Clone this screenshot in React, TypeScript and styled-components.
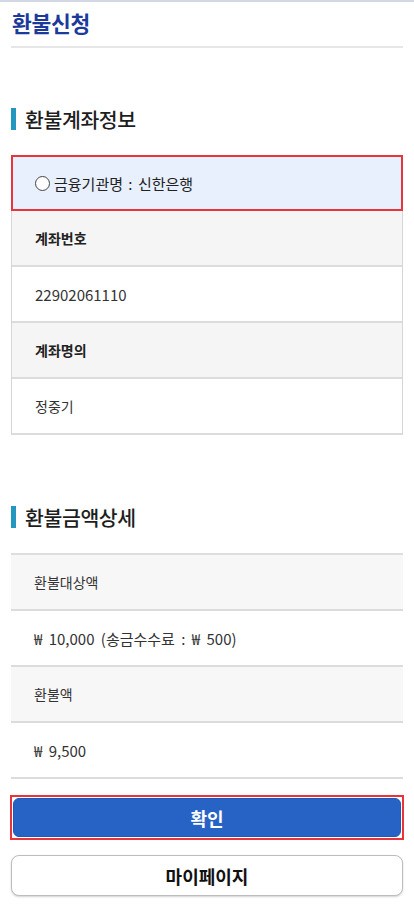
import React from 'react'
import styled, { createGlobalStyle } from 'styled-components'

const GlobalStyle = createGlobalStyle`
  html, body {
    margin: 0;
    padding: 0;
    background: #fff;
  }
  body {
    font-family: "Noto Sans CJK KR", "Noto Sans", sans-serif;
    color: #222;
  }
`

const Page = styled.div`
  border-top: 2px solid #d3d8e6;
  padding: 0 11px 20px;
`

const PageTitle = styled.h1`
  margin: 0;
  padding: 0 0 3px 1px;
  line-height: 41px;
  font-size: 21.5px;
  font-weight: 700;
  color: #1c3a9c;
  border-bottom: 2px solid #e6e6e6;
  letter-spacing: -0.3px;
`

const Section = styled.section<{ $top: number }>`
  margin-top: ${({ $top }) => $top}px;
`

const SectionTitle = styled.h2`
  display: flex;
  align-items: center;
  gap: 9px;
  margin: 0 0 25px;
  height: 22px;
  font-size: 20.5px;
  font-weight: 500;
  color: #1e1e1e;
  letter-spacing: -0.4px;
  &::before {
    content: '';
    width: 5px;
    height: 22px;
    background: #2397bf;
  }
`

const BoxTable = styled.div`
  border-left: 1px solid #d6d6d6;
  border-right: 1px solid #d6d6d6;
`

const LineTable = styled.div`
  border-top: 2px solid #dedede;
`

const Row = styled.div<{ $shade?: string }>`
  box-sizing: border-box;
  display: flex;
  align-items: center;
  height: 56px;
  padding-left: 23px;
  background: ${({ $shade }) => $shade || '#fff'};
  border-bottom: 2px solid #dcdcdc;
  font-size: 15px;
  color: #333;
  word-spacing: 3px;
  white-space: pre;
`

const Label = styled.span<{ $bold?: boolean }>`
  font-size: 14px;
  font-weight: ${({ $bold }) => ($bold ? 700 : 400)};
  color: ${({ $bold }) => ($bold ? '#222' : '#333')};
  word-spacing: 0;
`

const HighlightRow = styled.div`
  box-sizing: border-box;
  display: flex;
  align-items: center;
  gap: 2px;
  height: 56px;
  margin: 0 -1px;
  padding-left: 22px;
  background: #e8effd;
  border: 2px solid #e8343a;
  font-size: 15px;
  color: #222;
  word-spacing: 2px;
  white-space: pre;
`

const Radio = styled.span`
  display: inline-block;
  box-sizing: border-box;
  width: 15px;
  height: 15px;
  border: 1.5px solid #444;
  border-radius: 50%;
  background: #fff;
  margin-right: 2px;
`

const Buttons = styled.div`
  display: flex;
  flex-direction: column;
  gap: 15px;
  margin-top: 16px;
`

const Focus = styled.div`
  margin: 0 -1px;
  padding: 1px;
  border: 2px solid #e8343a;
`

const Button = styled.button<{ $primary?: boolean }>`
  display: block;
  width: 100%;
  box-sizing: border-box;
  height: ${({ $primary }) => ($primary ? 39 : 41)}px;
  border: ${({ $primary }) => ($primary ? '1px solid #2159b8' : '1px solid #bdbdbd')};
  border-radius: ${({ $primary }) => ($primary ? 6 : 8)}px;
  background: ${({ $primary }) => ($primary ? '#2763c5' : '#fff')};
  color: ${({ $primary }) => ($primary ? '#fff' : '#111')};
  box-shadow: ${({ $primary }) => ($primary ? 'none' : '0 1px 2px rgba(0,0,0,0.18)')};
  font-family: "Noto Sans CJK KR", "Noto Sans", sans-serif;
  font-size: 18px;
  font-weight: 700;
  padding: 0;
  cursor: pointer;
`

const App: React.FC = () => {
  return (
    <>
      <GlobalStyle />
      <Page>
        <PageTitle>환불신청</PageTitle>

        <Section $top={60}>
          <SectionTitle>환불계좌정보</SectionTitle>
          <BoxTable>
            <HighlightRow>
              <Radio />
              금융기관명 : 신한은행
            </HighlightRow>
            <Row $shade="#f5f5f5">
              <Label $bold>계좌번호</Label>
            </Row>
            <Row>22902061110</Row>
            <Row $shade="#f5f5f5">
              <Label $bold>계좌명의</Label>
            </Row>
            <Row>
              <Label>정중기</Label>
            </Row>
          </BoxTable>
        </Section>

        <Section $top={71}>
          <SectionTitle>환불금액상세</SectionTitle>
          <LineTable>
            <Row $shade="#f7f7f7">
              <Label>환불대상액</Label>
            </Row>
            <Row>₩ 10,000 (송금수수료 : ₩ 500)</Row>
            <Row $shade="#f7f7f7">
              <Label>환불액</Label>
            </Row>
            <Row>₩ 9,500</Row>
          </LineTable>
        </Section>

        <Buttons>
          <Focus>
            <Button $primary>확인</Button>
          </Focus>
          <Button>마이페이지</Button>
        </Buttons>
      </Page>
    </>
  )
}

export default App
